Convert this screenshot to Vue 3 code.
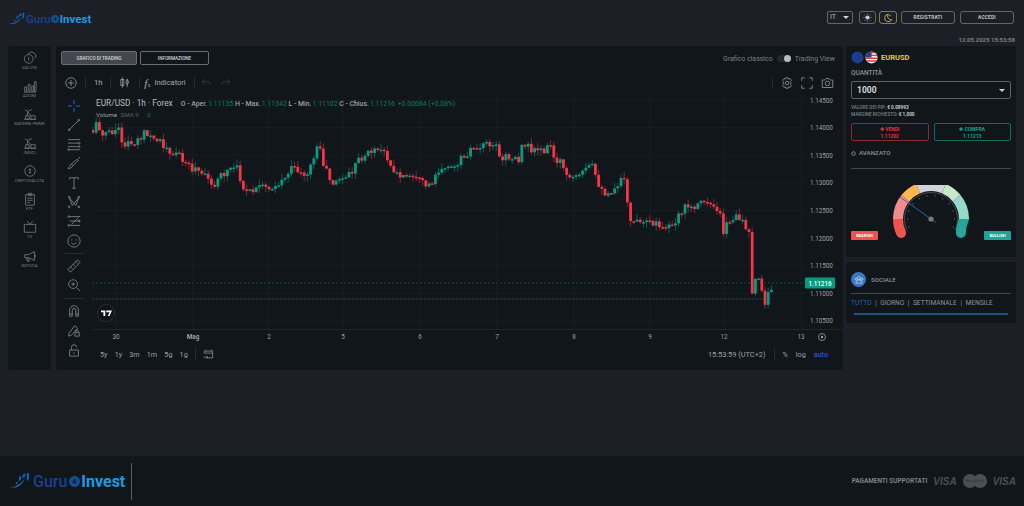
<template>
  <div class="page">
    <header class="top">
      <div class="logo">
        <svg class="logo-mark" viewBox="0 0 20 15" width="16" height="12">
          <path d="M0 13c5 2 12 0 15-8-3 5-9 9-15 8z" fill="#1976d2" />
          <path d="M6 9.500l2-1.500v3zM9.500 8V4l2-1.500v3zM13 5V1.500L15.500 0v3zM17 0h2v5l-2 3z" fill="#1565c0" />
        </svg>
        <span class="guru">Guru</span><span class="four">4</span><span class="invest">Invest</span>
      </div>
      <div class="top-ctrl">
        <div class="lang">IT <i class="caret"></i></div>
        <button class="mode">
          <svg viewBox="0 0 12 12" width="9" height="9"><circle cx="6" cy="6" r="2.8" fill="#c9cdd0" /><path d="M6 .5V2M6 10v1.500M.5 6H2M10 6h1.500M2 2l1 1M9 9l1 1M10 2L9 3M3 9l-1 1" stroke="#c9cdd0" stroke-width=".8" /></svg>
        </button>
        <button class="mode moon">
          <svg viewBox="0 0 12 12" width="10" height="10"><path d="M6.500 1.500a4.500 4.500 0 1 0 4 6.500 4 4 0 0 1-4-6.500z" fill="none" stroke="#d6c04a" stroke-width="1" /><path d="M8.500 2v2M7.500 3h2" stroke="#d6c04a" stroke-width=".6" /></svg>
        </button>
        <button class="auth reg">REGISTRATI</button>
        <button class="auth">ACCEDI</button>
      </div>
      <div class="stamp">12.05.2025 15:53:58</div>
    </header>

    <main class="main">
      <nav class="side">
        <div class="side-item" v-for="s in sideItems" :key="s.label">
          <svg viewBox="0 0 16 16" width="14" height="14" fill="none" stroke="#6f7579" stroke-width="1">
            <path :d="s.d" />
          </svg>
          <span>{{ s.label }}</span>
        </div>
      </nav>

      <section class="chart-panel">
        <div class="tabs-row">
          <button class="tab active">GRAFICO DI TRADING</button>
          <button class="tab">INFORMAZIONE</button>
          <div class="switch-wrap">
            <span>Grafico classico</span>
            <i class="switch"><b></b></i>
            <span>Trading View</span>
          </div>
        </div>

        <div class="toolbar">
          <svg class="tb-ico" viewBox="0 0 16 16" width="12" height="12"><circle cx="8" cy="8" r="7" /><path d="M8 4v8M4 8h8" /></svg>
          <i class="tb-sep"></i>
          <span class="tb-txt tf">1h</span>
          <i class="tb-sep"></i>
          <svg class="tb-ico" viewBox="0 0 16 16" width="12" height="13"><path d="M4.500 1v14M11 3v11" /><rect x="2.500" y="4" width="4" height="8" /><path d="M11 4l2 3.500-2 3.500-2-3.500z" /></svg>
          <i class="tb-sep"></i>
          <span class="fx"><em>f</em><small>x</small></span>
          <span class="tb-txt">Indicatori</span>
          <i class="tb-sep"></i>
          <svg class="tb-ico dim undo" viewBox="0 0 16 16" width="11" height="11"><path d="M6 3L2 7l4 4M2 7h8a4 4 0 0 1 4 4" /></svg>
          <svg class="tb-ico dim" viewBox="0 0 16 16" width="11" height="11"><path d="M10 3l4 4-4 4M14 7H6a4 4 0 0 0-4 4" /></svg>
          <div class="tb-right">
            <i class="tb-sep"></i>
            <svg class="tb-ico" viewBox="0 0 16 16" width="12" height="12"><path d="M6.500 1h3l.5 2 2-1 2 2.500-1.500 1.500.9 2-.9 2 1.500 1.500-2 2.500-2-1-.5 2h-3l-.5-2-2 1-2-2.500L3.500 10l-.9-2 .9-2L2 4.500 4 2l2 1z" /><circle cx="8" cy="8" r="2.3" /></svg>
            <svg class="tb-ico" viewBox="0 0 16 16" width="12" height="12"><path d="M1 5V1h4M11 1h4v4M15 11v4h-4M5 15H1v-4" /></svg>
            <svg class="tb-ico" viewBox="0 0 16 16" width="13" height="12"><path d="M1 4h3.500L6 2h4l1.500 2H15v10H1z" /><circle cx="8" cy="8.500" r="3" /></svg>
          </div>
        </div>

        <div class="chart-body">
          <div class="tools">
            <template v-for="(t, i) in tools" :key="i">
              <i v-if="t === 'sep'" class="tool-sep"></i>
              <svg v-else class="tool" :class="{ cross: i === 0 }" viewBox="0 0 16 16" width="14" height="14"><path :d="t" /></svg>
            </template>
          </div>

          <div class="plot-col">
            <div class="plot">
              <svg class="plot-svg" viewBox="92 95 751 250" width="751" height="250">
                <g stroke="#171f23" stroke-width="1">
                  <line v-for="p in prices" :key="p.label" x1="92" x2="805" :y1="p.y" :y2="p.y" />
                  <line v-for="d in days" :key="d.label" :x1="d.x" :x2="d.x" y1="95" y2="329" />
                </g>
                <line x1="92" x2="805" y1="283" y2="283" stroke="#0d5a4c" stroke-dasharray="2 2" stroke-width=".8" />
                <line x1="92" x2="772" y1="299" y2="299" stroke="#3a4a48" stroke-dasharray="3 1" stroke-width=".8" />
                <line x1="92" x2="843" y1="329.5" y2="329.5" stroke="#1e262a" />
                <g v-for="(c, i) in candles" :key="i">
                  <line :x1="c.x" :x2="c.x" :y1="c.hi" :y2="c.lo" :stroke="c.wick" stroke-width=".8" />
                  <rect :x="c.x - 1.4" :y="c.top" width="2.8" :height="c.h" :fill="c.fill" />
                </g>
                <text v-for="p in prices" :key="'l' + p.label" class="ax" x="810" :y="p.y + 2.5">{{ p.label }}</text>
                <text v-for="d in days" :key="'d' + d.label" class="ax" :class="{ bold: d.label === 'Mag' }" :x="d.x" y="339" text-anchor="middle">{{ d.label }}</text>
                <rect x="805" y="277.5" width="30" height="11" rx="1" fill="#089981" />
                <text class="ax tag" x="820" y="285.5" text-anchor="middle">1.11216</text>
                <circle cx="822" cy="337" r="3.5" fill="none" stroke="#9aa0a4" stroke-width=".8" />
                <circle cx="822" cy="337" r="1.2" fill="#9aa0a4" />
              </svg>
              <div class="legend">
                <div class="legend-top">
                  <span class="sym">EUR/USD · 1h · Forex</span>
                  <span class="ohlc">O - Aper.<b>1.11135</b> H - Max.<b>1.11342</b> L - Min.<b>1.11102</b> C - Chius.<b>1.11216</b> <b>+0.00084 (+0.08%)</b></span>
                </div>
                <div class="legend-vol"><span>Volume</span> <span class="sma">SMA 9</span> <b>0</b></div>
              </div>
              <div class="tv-badge">
                <svg viewBox="0 0 18 10" width="11" height="7"><path d="M0 0h7v9H4V3H0zM8.500 0H18l-4 9h-3l3-6H8.500z" fill="#fff" /></svg>
              </div>
            </div>
            <div class="range-bar">
              <span v-for="r in ranges" :key="r">{{ r }}</span>
              <i class="tb-sep"></i>
              <svg class="tb-ico" viewBox="0 0 16 16" width="11" height="11"><path d="M4 1v2M12 1v2M2 6V3h12v10H6M2 6h12M1 12h6M5 10l2 2-2 2" /></svg>
              <div class="range-right">
                <span class="clock">15:53:59 (UTC+2)</span>
                <i class="tb-sep"></i>
                <span>%</span>
                <span>log</span>
                <span class="auto">auto</span>
              </div>
            </div>
          </div>
        </div>
      </section>

      <aside class="right">
        <div class="card trade">
          <div class="pair">
            <svg viewBox="0 0 14 14" width="13" height="13">
              <circle cx="7" cy="7" r="6.5" fill="#1c3a8c" />
              <circle v-for="n in 12" :key="n" :cx="7 + 4.2 * Math.cos(n * 0.5236)" :cy="7 + 4.2 * Math.sin(n * 0.5236)" r=".5" fill="#35518f" />
            </svg>
            <svg viewBox="0 0 14 14" width="13" height="13">
              <defs><clipPath id="usclip"><circle cx="7" cy="7" r="6.5" /></clipPath></defs>
              <g clip-path="url(#usclip)">
                <rect width="14" height="14" fill="#f1ecec" />
                <path d="M0 1h14v1.500H0zM0 4h14v1.500H0zM0 7h14v1.500H0zM0 10h14v1.500H0z" fill="#d8404a" />
                <rect width="7" height="7" fill="#2f3f8f" />
              </g>
            </svg>
            <span>EURUSD</span>
          </div>
          <div class="lbl">QUANTITÀ</div>
          <div class="qty"><span>1000</span><i class="caret"></i></div>
          <div class="info">VALORE DEI PIP: <b>€ 0.08993</b></div>
          <div class="info">MARGINE RICHIESTO: <b>€ 1,000</b></div>
          <div class="trade-btns">
            <button class="sell"><span>✚ VENDI</span><span>1.11202</span></button>
            <button class="buy"><span>✚ COMPRA</span><span>1.11213</span></button>
          </div>
          <div class="adv">
            <svg viewBox="0 0 10 10" width="5" height="5"><circle cx="5" cy="5" r="3.5" fill="none" stroke="#8a8f93" stroke-width="2" /></svg>
            AVANZATO
          </div>
          <div class="rule"></div>
          <div class="gauge-wrap">
            <span class="pill bear">BEARISH</span>
            <svg class="gauge" viewBox="0 0 90 72" width="90" height="72">
              <g fill="none" stroke-width="10">
                <path :d="arc(205, 180)" stroke="#ef5350" stroke-linecap="round" />
                <path :d="arc(-25, 0)" stroke="#26a69a" stroke-linecap="round" />
                <path :d="arc(180, 141)" stroke="#f28b8b" />
                <path :d="arc(141, 113)" stroke="#ffb74d" />
                <path :d="arc(113, 67)" stroke="#d1d4dc" />
                <path :d="arc(67, 39)" stroke="#c8e6c9" />
                <path :d="arc(39, 0)" stroke="#98d8cc" />
              </g>
              <path :d="innerArc" fill="none" stroke="#5a5f63" stroke-width=".7" />
              <circle v-for="(t, i) in ticks" :key="i" :cx="t.x" :cy="t.y" r=".6" fill="#777c80" />
              <line x1="50" y1="37.5" x2="14" y2="12" stroke="#2f6fb5" stroke-width=".9" />
              <circle cx="45" cy="34" r="2.6" fill="#777c80" />
            </svg>
            <span class="pill bull">BULLISH</span>
          </div>
        </div>

        <div class="card social">
          <div class="soc-head">
            <span class="soc-ico">
              <svg viewBox="0 0 16 16" width="10" height="10" fill="none" stroke="#cfe0f5" stroke-width="1"><circle cx="8" cy="5" r="2.5" /><circle cx="3.5" cy="6.5" r="1.8" /><circle cx="12.5" cy="6.5" r="1.8" /><path d="M3 13c0-3 2-5 5-5s5 2 5 5z" /></svg>
            </span>
            <span>SOCIALE</span>
          </div>
          <div class="rule"></div>
          <div class="soc-tabs">
            <span class="on">TUTTO</span><i>|</i><span>GIORNO</span><i>|</i><span>SETTIMANALE</span><i>|</i><span>MENSILE</span>
          </div>
          <div class="soc-bar"></div>
        </div>
      </aside>
    </main>

    <footer class="foot">
      <div class="logo big">
        <svg class="logo-mark" viewBox="0 0 20 15" width="21" height="16">
          <path d="M0 13c5 2 12 0 15-8-3 5-9 9-15 8z" fill="#1976d2" />
          <path d="M6 9.500l2-1.500v3zM9.500 8V4l2-1.500v3zM13 5V1.500L15.500 0v3zM17 0h2v5l-2 3z" fill="#1565c0" />
        </svg>
        <span class="guru">Guru</span><span class="four">4</span><span class="invest">Invest</span>
      </div>
      <i class="foot-sep"></i>
      <div class="pay">
        <span class="pay-lbl">PAGAMENTI SUPPORTATI</span>
        <span class="visa">VISA</span>
        <span class="mc"><i></i><i></i><small>MasterCard</small></span>
        <span class="visa">VISA</span>
      </div>
    </footer>
  </div>
</template>

<script setup>
const sideItems = [
  { label: "VALUTE", d: "M6.500 4a5 5 0 1 0 0 10 5 5 0 0 0 0-10zM6 3a5 5 0 0 1 8.500 5M6.500 7v4" },
  { label: "AZIONI", d: "M2 14V9h2v5zM6 14V6h2v8zM10 14V8h2v6zM13 14V3h2v11zM1 15h14" },
  { label: "MATERIE PRIME", d: "M3 14V10h4v4zM9 14v-4h5v4zM1 14h14M5 10V5l4 5M5 5L2 3M5 5l5-2" },
  { label: "INDICI", d: "M3 14v-4h4v4zM9 14v-4h5v4zM1 14h14M5 10V5l4 5M5 5L2 3M5 5l5-2" },
  { label: "CRIPTOVALUTA", d: "M8 2a6 6 0 1 0 0 12A6 6 0 0 0 8 2zM8 5v6M6.500 6.500H9M6.500 9.500H9" },
  { label: "ETF", d: "M3 3h10v12H3zM6 1.500h4V4H6zM5 7h6M5 9.500h6M5 12h3" },
  { label: "TV", d: "M1.500 5h13v9h-13zM5 1.500L8 5l3-3.500" },
  { label: "NOTIZIA", d: "M2 6.500h4L13 3v10L6 10H2zM4 10l1 4h2l-1-4M14 6v4" }
]

const ring = (x, y) => `M${x - 1} ${y}a1 1 0 1 0 2 0a1 1 0 1 0-2 0`
const tools = [
  "M8 1v5M8 10v5M1 8h5M10 8h5",
  "M3 13L13 3" + ring(2.5, 13.5) + ring(13.5, 2.5),
  "M1 3h14M1 7h12M1 11h12M3 14.500h12" + ring(14, 7) + ring(14, 11) + ring(2, 14.5),
  "M1 14.500c2-1 2-4 4-5.500l2 2c-1 2-3.500 3.500-6 3.500zM5 9l6-5 2 1-6 6M12 4l3-3",
  "M3 4V2h10v2M8 2v12M6 14h4",
  "M2.500 3l3.500 9M13.500 3L10 12M2.500 3L10 12M13.500 3L6 12" + ring(2.5, 2.5) + ring(13.5, 2.5) + ring(2.5, 13.5) + ring(13.5, 13.5),
  "M3 3h12M3 8h12M3 13h12M13 4L5 12" + ring(2, 3) + ring(2, 13) + ring(14, 8),
  "M8 1a7 7 0 1 0 0 14A7 7 0 0 0 8 1zM5.500 6v1.500M10.500 6v1.500M5 10c1.500 2 4.500 2 6 0",
  "sep",
  "M1 12L12 1l3 3L4 15zM4 9l2 2M7 6l2 2M10 3l2 2",
  "M7 2a5 5 0 1 0 0 10A5 5 0 0 0 7 2zM11 11l4 4M7 5v4M5 7h4",
  "sep",
  "M3 14V7a5 5 0 0 1 10 0v7h-3V7a2 2 0 0 0-4 0v7zM3 11.500h3M10 11.500h3",
  "M2 12L9 3l3 3-7 8-3 1zM9 11h5v4H9zM10 11V9.500a1.500 1.500 0 0 1 3 0V11",
  "M3 8h10v7H3zM5 8V5a3 3 0 0 1 6 0M8 10.500v2",
  "M3 14h10"
]

const priceRows = ["1.14500", "1.14000", "1.13500", "1.13000", "1.12500", "1.12000", "1.11500", "1.11000", "1.10500"]
const prices = priceRows.map((label, i) => ({ label, y: 100 + i * 27.6 }))
const days = [
  { label: "30", x: 116 }, { label: "Mag", x: 193 }, { label: "2", x: 269 }, { label: "5", x: 343 },
  { label: "6", x: 420 }, { label: "7", x: 497 }, { label: "8", x: 574 }, { label: "9", x: 650 },
  { label: "12", x: 724 }, { label: "13", x: 801 }
]
const ranges = ["5y", "1y", "3m", "1m", "5g", "1g"]

// rough close prices traced from the chart, x then y
const trace = [
  [92, 132], [96, 126], [104, 133], [110, 133], [118, 130], [124, 146], [130, 143], [138, 139], [146, 133], [150, 140],
  [156, 140], [165, 146], [172, 153], [180, 155], [185, 160], [190, 168], [200, 172], [205, 178], [215, 183], [222, 176],
  [232, 168], [238, 170], [245, 195], [250, 192], [262, 188], [272, 186], [280, 183], [288, 172], [296, 168], [303, 175],
  [310, 170], [318, 143], [324, 165], [332, 183], [345, 178], [352, 172], [360, 160], [368, 152], [380, 150], [388, 158],
  [393, 170], [398, 176], [410, 178], [425, 185], [430, 185], [438, 170], [445, 165], [450, 170], [458, 162], [470, 150],
  [477, 145], [490, 142], [496, 143], [499, 158], [520, 158], [523, 143], [530, 148], [540, 150], [550, 147], [552, 148],
  [555, 158], [562, 162], [565, 177], [570, 178], [574, 180], [580, 178], [586, 170], [592, 166], [597, 185], [601, 193],
  [612, 190], [622, 178], [625, 185], [629, 218], [640, 225], [650, 224], [656, 222], [660, 232], [668, 226], [675, 220],
  [680, 212], [686, 208], [690, 210], [700, 206], [705, 200], [712, 204], [720, 210], [722, 233], [728, 222], [735, 218],
  [745, 225], [749, 228], [752, 292], [756, 274], [760, 285], [765, 305], [768, 297], [772, 285]
]

function traceY(x) {
  for (let i = 1; i < trace.length; i++) {
    if (x <= trace[i][0]) {
      const [x0, y0] = trace[i - 1]
      const [x1, y1] = trace[i]
      return y0 + ((y1 - y0) * (x - x0)) / (x1 - x0)
    }
  }
  return 285
}

let seed = 17
function rnd() {
  seed = (seed * 1103515245 + 12345) % 2147483648
  return seed / 2147483648
}

const candles = []
let prev = 130
for (let x = 93; x <= 772; x += 3.2) {
  const c = traceY(x) + (rnd() - 0.5) * 9
  const top = Math.min(prev, c)
  const bot = Math.max(prev, c)
  const up = c < prev
  candles.push({
    x,
    top,
    h: Math.max(bot - top, 1.5),
    hi: top - rnd() * 6,
    lo: bot + rnd() * 6,
    fill: up ? "#089981" : "#f23645",
    wick: up ? "#0a6f60" : "#a52a38"
  })
  prev = c
}

const cx = 45
const cy = 34
function pt(a, r) {
  const t = (a * Math.PI) / 180
  return [cx + r * Math.cos(t), cy - r * Math.sin(t)]
}
function arc(from, to) {
  const [x0, y0] = pt(from, 33)
  const [x1, y1] = pt(to, 33)
  return `M${x0} ${y0}A33 33 0 0 1 ${x1} ${y1}`
}
const innerStart = pt(205, 26.5)
const innerEnd = pt(-25, 26.5)
const innerArc = `M${innerStart[0]} ${innerStart[1]}A26.5 26.5 0 1 1 ${innerEnd[0]} ${innerEnd[1]}`
const ticks = []
for (let a = -20; a <= 200; a += 20) {
  const [x, y] = pt(a, 23.5)
  ticks.push({ x, y })
}
</script>

<style>
html,
body {
  margin: 0;
  background: #1d1f27;
}
</style>

<style scoped>
.page {
  width: 1024px;
  height: 506px;
  display: flex;
  flex-direction: column;
  background: #1d1f27;
  font-family: Roboto, "Liberation Sans", sans-serif;
  color: #b8bcc0;
  overflow: hidden;
}

button {
  font-family: inherit;
  cursor: pointer;
}

.top {
  height: 46px;
  flex: none;
  position: relative;
  display: flex;
  justify-content: space-between;
  padding: 11px 10px 0 9px;
  box-sizing: border-box;
}

.logo {
  display: flex;
  align-items: center;
  height: 16px;
  font-weight: 500;
  font-size: 11.5px;
}

.logo-mark {
  margin-right: 1px;
}

.guru {
  color: #1c3f94;
}

.four {
  width: 8px;
  height: 8px;
  border-radius: 50%;
  background: #13508f;
  color: #0f161a;
  font-size: 6px;
  line-height: 8px;
  text-align: center;
  margin: 0 .5px;
}

.invest {
  color: #1a9be0;
  font-weight: 700;
}

.logo.big {
  font-size: 16px;
  height: 24px;
}

.logo.big .logo-mark {
  margin-right: 3px;
}

.logo.big .four {
  width: 11px;
  height: 11px;
  font-size: 8px;
  line-height: 11px;
  margin: 0 1.5px;
}

.top-ctrl {
  display: flex;
  align-items: flex-start;
  gap: 4px;
  height: 15px;
}

.lang {
  width: 26px;
  height: 13px;
  box-sizing: border-box;
  border: 1px solid #63676c;
  border-radius: 2px;
  font-size: 7px;
  line-height: 11px;
  padding-left: 2px;
  color: #b8bcc0;
  position: relative;
  margin-right: 2px;
}

.caret {
  display: inline-block;
  width: 0;
  height: 0;
  border-left: 3px solid transparent;
  border-right: 3px solid transparent;
  border-top: 3px solid #d0d4d8;
  position: absolute;
  right: 3px;
  top: 4px;
}

.mode {
  width: 17px;
  height: 13px;
  padding: 0;
  background: transparent;
  border: 1px solid #63676c;
  border-radius: 3px;
  display: flex;
  align-items: center;
  justify-content: center;
}

.mode.moon {
  width: 18px;
  border-color: #8f7f30;
  margin-left: -1px;
}

.auth {
  width: 54px;
  height: 13px;
  padding: 0;
  background: transparent;
  border: 1px solid #63676c;
  border-radius: 3px;
  color: #c3c6c9;
  font-size: 4.8px;
  font-weight: 700;
  letter-spacing: .2px;
}

.auth.reg {
  margin-right: 1px;
}

.stamp {
  position: absolute;
  right: 9px;
  top: 36px;
  font-size: 6px;
  font-weight: 700;
  color: #7d8185;
}

.main {
  height: 324px;
  flex: none;
  display: flex;
  padding: 0 8px;
  align-items: stretch;
}

.side {
  width: 43px;
  flex: none;
  background: #10161a;
  border-radius: 3px;
  display: flex;
  flex-direction: column;
  box-sizing: border-box;
}

.side-item {
  height: 28.3px;
  display: flex;
  flex-direction: column;
  align-items: center;
  justify-content: center;
}

.side-item span {
  font-size: 4.2px;
  color: #7d8185;
  white-space: nowrap;
}

.chart-panel {
  width: 787px;
  flex: none;
  margin-left: 5px;
  background: #10161a;
  border-radius: 3px;
  display: flex;
  flex-direction: column;
  overflow: hidden;
}

.tabs-row {
  height: 24px;
  flex: none;
  display: flex;
  align-items: flex-start;
  padding: 5px 8px 0 5px;
  gap: 3px;
  box-sizing: border-box;
}

.tab {
  height: 14px;
  width: 69px;
  padding: 0;
  background: transparent;
  border: 1px solid #6a6e72;
  border-radius: 2px;
  color: #d5d7da;
  font-size: 4.6px;
  font-weight: 500;
}

.tab.active {
  width: 76px;
  background: #43474d;
}

.switch-wrap {
  margin-left: auto;
  display: flex;
  align-items: center;
  gap: 4px;
  height: 15px;
  font-size: 7px;
  color: #7d8185;
}

.switch {
  width: 14px;
  height: 7px;
  background: #23292d;
  border-radius: 4px;
  position: relative;
}

.switch b {
  position: absolute;
  right: 0;
  top: 0;
  width: 7px;
  height: 7px;
  border-radius: 50%;
  background: #b8bcc0;
}

.toolbar {
  height: 25px;
  flex: none;
  display: flex;
  align-items: center;
  padding-left: 9px;
  gap: 8px;
  color: #b2b5be;
}

.tb-ico {
  fill: none;
  stroke: #9ea2a6;
  stroke-width: 1;
  flex: none;
}

.tb-ico.dim {
  stroke: #474c50;
}

.tb-ico.undo {
  margin-left: -2px;
}

.tb-sep {
  width: 1px;
  height: 12px;
  background: #262d31;
  flex: none;
}

.tb-txt {
  font-size: 7.5px;
  color: #a7abaf;
}

.fx {
  font-family: "Liberation Serif", serif;
  font-size: 11px;
  color: #a7abaf;
  margin: 0 -4px 0 -4px;
}

.fx small {
  font-size: 6px;
}

.tb-right {
  margin-left: auto;
  display: flex;
  align-items: center;
  gap: 8px;
  padding-right: 9px;
}

.chart-body {
  flex: 1;
  display: flex;
  min-height: 0;
}

.tools {
  width: 36px;
  flex: none;
  display: flex;
  flex-direction: column;
  align-items: center;
  padding: 3.5px 0 0;
  box-sizing: border-box;
  gap: 5.3px;
  overflow: hidden;
}

.tool {
  fill: none;
  stroke: #7f8387;
  stroke-width: 1;
  flex: none;
}

.tool.cross {
  stroke: #2962ff;
}

.tool-sep {
  width: 19px;
  height: 1px;
  background: #272e32;
  flex: none;
}

.plot-col {
  width: 751px;
  flex: none;
  display: flex;
  flex-direction: column;
}

.plot {
  height: 250px;
  flex: none;
  position: relative;
}

.plot-svg {
  display: block;
}

.ax {
  font-family: Roboto, sans-serif;
  font-size: 6.3px;
  fill: #9ea2a6;
}

.ax.bold {
  font-weight: 700;
}

.ax.tag {
  fill: #fff;
  font-weight: 500;
}

.legend {
  position: absolute;
  left: 4px;
  top: 3px;
  font-size: 6.9px;
  color: #9ea2a6;
}

.legend-top {
  display: flex;
  align-items: baseline;
  gap: 8px;
}

.sym {
  font-size: 8.3px;
  color: #b8bcc0;
}

.ohlc {
  font-weight: 500;
}

.ohlc b,
.legend-vol b {
  font-weight: 400;
  color: #0b7d6a;
  margin-left: 1px;
}

.legend-vol {
  margin-top: 3px;
  font-size: 6.2px;
}

.sma {
  color: #5f6467;
  margin: 0 6px 0 2px;
}

.tv-badge {
  position: absolute;
  left: 5px;
  top: 209px;
  width: 18px;
  height: 18px;
  box-sizing: border-box;
  border: 1px solid #2a3035;
  border-radius: 50%;
  background: #10131a;
  display: flex;
  align-items: center;
  justify-content: center;
}

.range-bar {
  height: 18px;
  display: flex;
  align-items: center;
  gap: 7.2px;
  padding-left: 8px;
  font-size: 7.2px;
  color: #9ea2a6;
}

.range-right {
  margin-left: auto;
  display: flex;
  align-items: center;
  gap: 8px;
  padding-right: 15px;
}

.clock {
  font-size: 7.4px;
}

.auto {
  color: #2962ff;
}

.right {
  width: 170px;
  flex: none;
  margin-left: 3px;
  display: flex;
  flex-direction: column;
  gap: 5px;
}

.card {
  background: #10161a;
  border-radius: 3px;
  padding: 0 5px;
  box-sizing: border-box;
}

.trade {
  height: 211px;
  flex: none;
  padding-top: 5px;
}

.pair {
  display: flex;
  align-items: center;
  gap: 1px;
  height: 13px;
  font-size: 7.5px;
  font-weight: 700;
  color: #e2c84a;
}

.pair span {
  margin-left: 2px;
}

.lbl {
  margin-top: 5px;
  font-size: 6.5px;
  font-weight: 500;
  color: #8e9296;
}

.qty {
  margin-top: 4px;
  height: 18px;
  box-sizing: border-box;
  border: 1px solid #5e6266;
  border-radius: 2px;
  font-size: 8.5px;
  font-weight: 700;
  color: #d8dadc;
  line-height: 16px;
  padding-left: 5px;
  position: relative;
}

.qty .caret {
  top: 7px;
  right: 5px;
}

.info {
  font-size: 4.7px;
  font-weight: 500;
  color: #7d8185;
  line-height: 7px;
}

.qty + .info {
  margin-top: 5px;
}

.info b {
  color: #c9ccce;
}

.trade-btns {
  margin-top: 5px;
  display: flex;
  gap: 5px;
}

.trade-btns button {
  flex: 1;
  height: 18px;
  padding: 0;
  background: transparent;
  border-radius: 2px;
  border: 1px solid;
  font-size: 4.9px;
  font-weight: 700;
  display: flex;
  flex-direction: column;
  align-items: center;
  justify-content: center;
  gap: 1px;
}

.sell {
  color: #e0353f;
  border-color: #8a2a30 !important;
}

.buy {
  color: #17a08c;
  border-color: #0f6d60 !important;
}

.adv {
  margin-top: 8px;
  display: flex;
  align-items: center;
  gap: 3px;
  font-size: 6.2px;
  font-weight: 500;
  color: #8e9296;
}

.rule {
  height: 1px;
  background: #44494d;
}

.trade .rule {
  margin-top: 11px;
}

.gauge-wrap {
  position: relative;
  display: flex;
  justify-content: center;
  padding-top: 16px;
}

.gauge {
  display: block;
}

.pill {
  position: absolute;
  top: 62px;
  width: 27px;
  height: 9px;
  border-radius: 1px;
  font-size: 4px;
  font-weight: 700;
  color: #fff;
  text-align: center;
  line-height: 9px;
}

.bear {
  left: 0;
  background: #ef5350;
}

.bull {
  right: 0;
  background: #1fa596;
}

.social {
  height: 61px;
  flex: none;
}

.soc-head {
  height: 31px;
  padding-top: 4px;
  box-sizing: border-box;
  display: flex;
  align-items: center;
  gap: 5px;
  font-size: 6.2px;
  font-weight: 500;
  color: #8e9296;
}

.soc-ico {
  width: 15px;
  height: 15px;
  border-radius: 50%;
  background: #3a78c2;
  display: flex;
  align-items: center;
  justify-content: center;
}

.soc-tabs {
  margin-top: 5px;
  display: flex;
  gap: 3.5px;
  font-size: 6.6px;
  color: #8e9296;
}

.soc-tabs i {
  font-style: normal;
}

.soc-tabs .on {
  color: #2a64a8;
}

.soc-bar {
  margin: 6px 3px 0;
  height: 2px;
  background: #1b5287;
}

.foot {
  margin-top: auto;
  height: 50px;
  flex: none;
  background: #10161a;
  display: flex;
  align-items: center;
  padding: 0 8px 0 9px;
  box-sizing: border-box;
}

.foot-sep {
  width: 1px;
  height: 37px;
  background: #565a5e;
  margin-left: 6px;
}

.pay {
  margin-left: auto;
  display: flex;
  align-items: center;
  gap: 6px;
}

.pay-lbl {
  font-size: 6.4px;
  font-weight: 700;
  color: #7d8185;
}

.visa {
  font-family: "Liberation Sans", sans-serif;
  font-size: 10px;
  font-weight: 700;
  font-style: italic;
  color: #4a4f54;
}

.mc {
  position: relative;
  width: 24px;
  height: 14px;
  display: block;
}

.mc i {
  position: absolute;
  top: 0;
  width: 14px;
  height: 14px;
  border-radius: 50%;
  background: #4a4f54;
}

.mc i:first-child {
  left: 0;
}

.mc i:nth-child(2) {
  right: 0;
}

.mc small {
  position: absolute;
  left: 0;
  right: 0;
  top: 5px;
  text-align: center;
  font-size: 3.5px;
  color: #2c3034;
}
</style>
